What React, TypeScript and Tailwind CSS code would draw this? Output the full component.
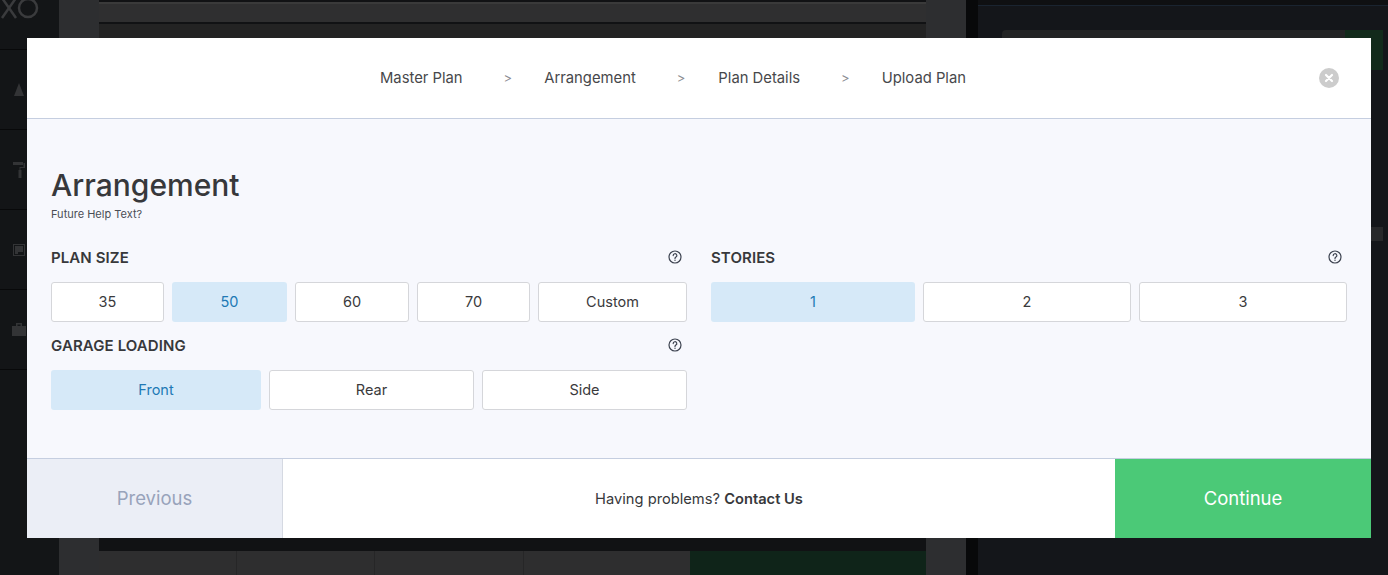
import React from 'react';

const font = { fontFamily: '"Inter", "Liberation Sans", sans-serif' };

const HelpIcon = () => (
  <svg width="14" height="14" viewBox="0 0 14 14" fill="none" stroke="#3d4350" strokeWidth="1.2">
    <circle cx="7" cy="7" r="6" />
    <path d="M5.2 5.6a1.8 1.8 0 1 1 2.7 1.5c-.6.4-.9.7-.9 1.3" strokeLinecap="round" />
    <circle cx="7" cy="10.3" r=".7" fill="#3d4350" stroke="none" />
  </svg>
);

const CloseIcon = () => (
  <svg width="20" height="20" viewBox="0 0 20 20">
    <circle cx="10" cy="10" r="10" fill="#cccccc" />
    <path d="M7 7l6 6M13 7l-6 6" stroke="#ffffff" strokeWidth="2.2" strokeLinecap="round" />
  </svg>
);

const Logo = () => (
  <svg width="40" height="22" viewBox="0 0 40 22" fill="none" stroke="#3a3b3d" strokeWidth="2.5">
    <path d="M2 -2l14 20M16 -2L2 18" />
    <circle cx="28" cy="8" r="9" />
  </svg>
);

interface Option {
  label: string;
  width: string;
  active?: boolean;
}

const OptionRow = ({ options }: { options: Option[] }) => (
  <div className="flex gap-2">
    {options.map((option) => (
      <button
        key={option.label}
        className={
          option.width +
          ' h-10 pb-[1px] rounded-[3px] text-[14.5px] ' +
          (option.active
            ? 'bg-[#d6e9f8] text-[#2179b5]'
            : 'bg-white border border-[#d5d6da] text-[#3a3a3c]')
        }
      >
        {option.label}
      </button>
    ))}
  </div>
);

const SectionLabel = ({ title }: { title: string }) => (
  <div className="flex items-center justify-between h-[20px] pr-[5px] mb-[15px]">
    <span className="pt-[2px] text-[15px] tracking-[0.1px] font-semibold text-[#37383b]">{title}</span>
    <HelpIcon />
  </div>
);

const Backdrop = () => (
  <div className="flex h-full w-full bg-[#111214]">
    <div className="w-[59px] shrink-0 flex flex-col bg-[#131517]">
      <div className="h-[50px] border-b border-[#08090a] overflow-hidden">
        <Logo />
      </div>
      <div className="h-[80px] border-b border-[#08090a] flex items-center pl-[14px]">
        <svg width="10" height="13" viewBox="0 0 10 13"><path d="M5 0l5 13H0z" fill="#333436" /></svg>
      </div>
      <div className="h-[80px] border-b border-[#08090a] flex items-center pl-[13px]">
        <svg width="12" height="16" viewBox="0 0 12 16"><path d="M0 0h10v3H0zM10.500 1H12v5H7.500v2h1v8h-3V8h1V5H10.500z" fill="#333436" /></svg>
      </div>
      <div className="h-[80px] border-b border-[#08090a] flex items-center pl-[13px]">
        <svg width="12" height="12" viewBox="0 0 12 12"><path d="M0 0h12v12H0zM1 1v10h10V1zM2 2h8v6H5v2H2z" fill="#333436" fillRule="evenodd" /></svg>
      </div>
      <div className="h-[80px] border-b border-[#08090a] flex items-center pl-[12px]">
        <svg width="14" height="13" viewBox="0 0 14 13"><path d="M4 3V0h6v3h4v10H0V3zM5.500 1.500V3h3V1.500z" fill="#333436" fillRule="evenodd" /></svg>
      </div>
    </div>
    <div className="w-[40px] shrink-0 bg-[#2d2e30]" />
    <div className="w-[827px] shrink-0 flex flex-col">
      <div className="h-[2px] bg-[#111214]" />
      <div className="h-[2px] bg-[#3a3a3a]" />
      <div className="h-[18px] bg-[#2f2f30]" />
      <div className="h-[2px] bg-[#111214]" />
      <div className="flex-1 bg-[#232323]" />
      <div className="h-[13px] bg-[#111214]" />
      <div className="h-[24px] flex">
        <div className="w-[138px] bg-[#2e2e2f] border-r border-[#262627]" />
        <div className="w-[138px] bg-[#2e2e2f] border-r border-[#262627]" />
        <div className="w-[149px] bg-[#2e2e2f] border-r border-[#262627]" />
        <div className="w-[166px] bg-[#2e2e2f]" />
        <div className="flex-1 bg-[#0f2419]" />
      </div>
    </div>
    <div className="w-[40px] shrink-0 bg-[#2d2e30]" />
    <div className="w-[12px] shrink-0 bg-[#08090a]" />
    <div className="flex-1 bg-[#14161a] flex flex-col">
      <div className="h-[6px] bg-[#0f1012] border-b border-[#1a2430]" />
      <div className="ml-[24px] mt-[24px] mr-[5px] h-[40px] flex">
        <div className="flex-1 bg-[#232425] rounded-tl-[4px]" />
        <div className="w-[38px] bg-[#122a1b]" />
      </div>
      <div className="ml-auto mr-[5px] mt-[157px] w-[14px] h-[14px] bg-[#27282a]" />
    </div>
  </div>
);

export default function App() {
  return (
    <div className="relative w-[1388px] h-[575px] overflow-hidden" style={font}>
      <Backdrop />
      <div className="absolute left-[27px] top-[38px] w-[1344px] h-[500px] flex flex-col bg-[#f7f8fd] rounded-t-[3px]">
        <div className="relative h-[81px] shrink-0 bg-white border-b border-[#c5cee0] flex items-center justify-center pr-[52px] text-[14.8px] leading-[20px] text-[#47484b]">
          <div className="flex items-center">
            <span>Master Plan</span>
            <span className="ml-[41px] mr-[32px] text-[13px] text-[#8b8d92]">&gt;</span>
            <span>Arrangement</span>
            <span className="ml-[41px] mr-[33px] text-[13px] text-[#8b8d92]">&gt;</span>
            <span>Plan Details</span>
            <span className="ml-[41px] mr-[32px] text-[13px] text-[#8b8d92]">&gt;</span>
            <span>Upload Plan</span>
          </div>
          <div className="absolute right-[32px] top-[30px]">
            <CloseIcon />
          </div>
        </div>

        <div className="flex-1 px-[24px] pt-[46px]">
          <h1 className="text-[30px] leading-[40px] font-medium text-[#37383b]">Arrangement</h1>
          <p className="text-[11px] leading-[14px] mt-[2px] text-[#4a4d55]">Future Help Text?</p>
          <div className="flex gap-[24px] mt-[26px]">
            <div className="w-[636px]">
              <SectionLabel title="PLAN SIZE" />
              <OptionRow
                options={[
                  { label: '35', width: 'w-[113px]' },
                  { label: '50', width: 'w-[115px]', active: true },
                  { label: '60', width: 'w-[114px]' },
                  { label: '70', width: 'w-[113px]' },
                  { label: 'Custom', width: 'w-[149px]' },
                ]}
              />
              <div className="mt-[13px]">
                <SectionLabel title="GARAGE LOADING" />
                <OptionRow
                  options={[
                    { label: 'Front', width: 'w-[210px]', active: true },
                    { label: 'Rear', width: 'w-[205px]' },
                    { label: 'Side', width: 'w-[205px]' },
                  ]}
                />
              </div>
            </div>
            <div className="w-[636px]">
              <SectionLabel title="STORIES" />
              <OptionRow
                options={[
                  { label: '1', width: 'w-[204px]', active: true },
                  { label: '2', width: 'w-[208px]' },
                  { label: '3', width: 'w-[208px]' },
                ]}
              />
            </div>
          </div>
        </div>

        <div className="h-[80px] shrink-0 flex border-t border-[#c5cee0]">
          <div className="w-[256px] bg-[#ebeef6] border-r border-[#d5d9e2] flex items-center justify-center text-[18.5px] text-[#98a3bb]">
            Previous
          </div>
          <div className="flex-1 bg-white flex items-center justify-center pt-[1px] text-[14.7px] text-[#37383b]">
            Having problems?&nbsp;<span className="font-semibold">Contact Us</span>
          </div>
          <div className="w-[256px] bg-[#4bc977] flex items-center justify-center text-[18.5px] text-white">
            Continue
          </div>
        </div>
      </div>
    </div>
  );
}
